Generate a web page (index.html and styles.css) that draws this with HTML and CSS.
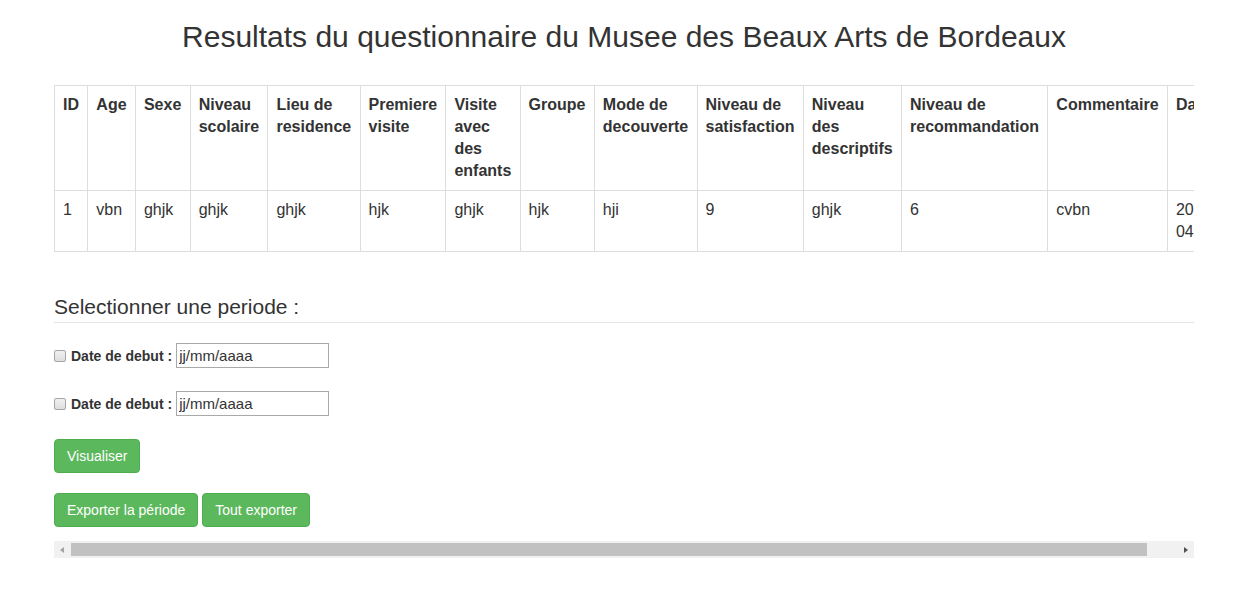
FILE: index.html
```html
<!DOCTYPE html>
<html lang="fr">
<head>
<meta charset="utf-8">
<title>Resultats du questionnaire</title>
<link rel="stylesheet" href="styles.css">
</head>
<body>
<div class="container">
  <h2 class="title">Resultats du questionnaire du Musee des Beaux Arts de Bordeaux</h2>
  <div class="scroller">
    <table class="results">
      <thead>
        <tr>
          <th>ID</th>
          <th>Age</th>
          <th>Sexe</th>
          <th>Niveau scolaire</th>
          <th>Lieu de residence</th>
          <th>Premiere visite</th>
          <th>Visite avec des enfants</th>
          <th>Groupe</th>
          <th>Mode de decouverte</th>
          <th>Niveau de satisfaction</th>
          <th>Niveau des descriptifs</th>
          <th>Niveau de recommandation</th>
          <th>Commentaire</th>
          <th>Date</th>
        </tr>
      </thead>
      <tbody>
        <tr>
          <td>1</td>
          <td>vbn</td>
          <td>ghjk</td>
          <td>ghjk</td>
          <td>ghjk</td>
          <td>hjk</td>
          <td>ghjk</td>
          <td>hjk</td>
          <td>hji</td>
          <td>9</td>
          <td>ghjk</td>
          <td>6</td>
          <td>cvbn</td>
          <td><span class="nw">2018-</span><wbr><span class="nw">04-20</span></td>
        </tr>
      </tbody>
    </table>

    <form class="period">
      <fieldset class="period-set">
        <legend class="period-legend">Selectionner une periode :</legend>
        <div class="date-row">
          <input type="checkbox" class="check" id="d1">
          <label for="d1" class="date-label">Date de debut :</label>
          <input type="text" class="date-input" value="jj/mm/aaaa">
        </div>
        <div class="date-row">
          <input type="checkbox" class="check" id="d2">
          <label for="d2" class="date-label">Date de debut :</label>
          <input type="text" class="date-input" value="jj/mm/aaaa">
        </div>
      </fieldset>
      <div class="actions">
        <button type="button" class="btn">Visualiser</button>
      </div>
      <div class="actions">
        <button type="button" class="btn">Exporter la période</button>
        <button type="button" class="btn">Tout exporter</button>
      </div>
    </form>
  </div>
  <div class="hscroll" aria-hidden="true">
    <span class="hs-btn hs-left"></span>
    <span class="hs-track"><span class="hs-thumb"></span></span>
    <span class="hs-btn hs-right"></span>
  </div>
</div>
</body>
</html>
```

FILE: styles.css
```css
* {
  box-sizing: border-box;
}

html, body {
  background: #fff;
}

body {
  margin: 0;
  padding-left: 5px;
  font-family: "Liberation Sans", Arial, Helvetica, sans-serif;
  font-size: 14px;
  line-height: 20px;
  color: #333;
}

.container {
  width: 1170px;
  margin: 0 auto;
  padding: 0 15px;
}

.title {
  margin: 20px 0 32px;
  font-size: 30px;
  line-height: 33px;
  font-weight: 500;
  text-align: center;
  color: #333;
}

.scroller {
  overflow: hidden;
  padding-bottom: 14px;
}

/* horizontal scrollbar (drawn) */
.hscroll {
  display: flex;
  height: 17px;
  background: #f1f1f1;
}

.hs-btn {
  width: 17px;
  flex: none;
  display: flex;
  align-items: center;
  justify-content: center;
}

.hs-left::before,
.hs-right::before {
  content: "";
  width: 0;
  height: 0;
  border-top: 3.5px solid transparent;
  border-bottom: 3.5px solid transparent;
}

.hs-left::before {
  border-right: 4px solid #a3a3a3;
  margin-left: -1px;
}

.hs-right::before {
  border-left: 4px solid #505050;
  margin-left: 1px;
}

.hs-track {
  flex: 1;
  display: flex;
  padding: 2px 0;
}

.hs-thumb {
  width: 97.3%;
  background: #c1c1c1;
}

.results {
  width: 100%;
  border-collapse: collapse;
  border: 1px solid #ddd;
  font-size: 16px;
  line-height: 22px;
  margin: 0 0 20px;
}

.results th,
.results td {
  border: 1px solid #ddd;
  padding: 8px 8.35px 8px 8px;
  text-align: left;
  vertical-align: top;
}

.results th {
  font-weight: bold;
}

.nw {
  white-space: nowrap;
}

.period {
  margin: 0;
  padding-top: 20px;
}

.period-set {
  margin: 0;
  padding: 0;
  border: 0;
  min-width: 0;
}

.period-legend {
  display: block;
  width: 100%;
  padding: 0;
  margin-bottom: 20px;
  font-size: 21px;
  line-height: 30px;
  color: #333;
  border-bottom: 1px solid #e5e5e5;
}

.date-row {
  display: flex;
  align-items: center;
  height: 25px;
  margin-bottom: 23px;
}

.check {
  -webkit-appearance: none;
  appearance: none;
  width: 12px;
  height: 12px;
  margin: 0 5px 0 0;
  border: 1px solid #a6a6a6;
  border-radius: 2px;
  background: linear-gradient(#f0f0f0, #dedede);
}

.date-label {
  font-weight: bold;
  margin-right: 4px;
}

.date-input {
  width: 153px;
  height: 25px;
  padding: 0 2px;
  border: 1px solid #a9a9a9;
  font-family: "Liberation Sans", Arial, sans-serif;
  font-size: 15px;
  color: #333;
  background: #fff;
}

.actions {
  display: flex;
  gap: 4px;
  margin-bottom: 20px;
}

.actions:last-child {
  margin-bottom: 0;
}

.btn {
  padding: 6px 12px;
  font-family: "Liberation Sans", Arial, sans-serif;
  font-size: 14px;
  line-height: 20px;
  color: #fff;
  background: #5cb85c;
  border: 1px solid #4cae4c;
  border-radius: 4px;
  cursor: pointer;
}
```
